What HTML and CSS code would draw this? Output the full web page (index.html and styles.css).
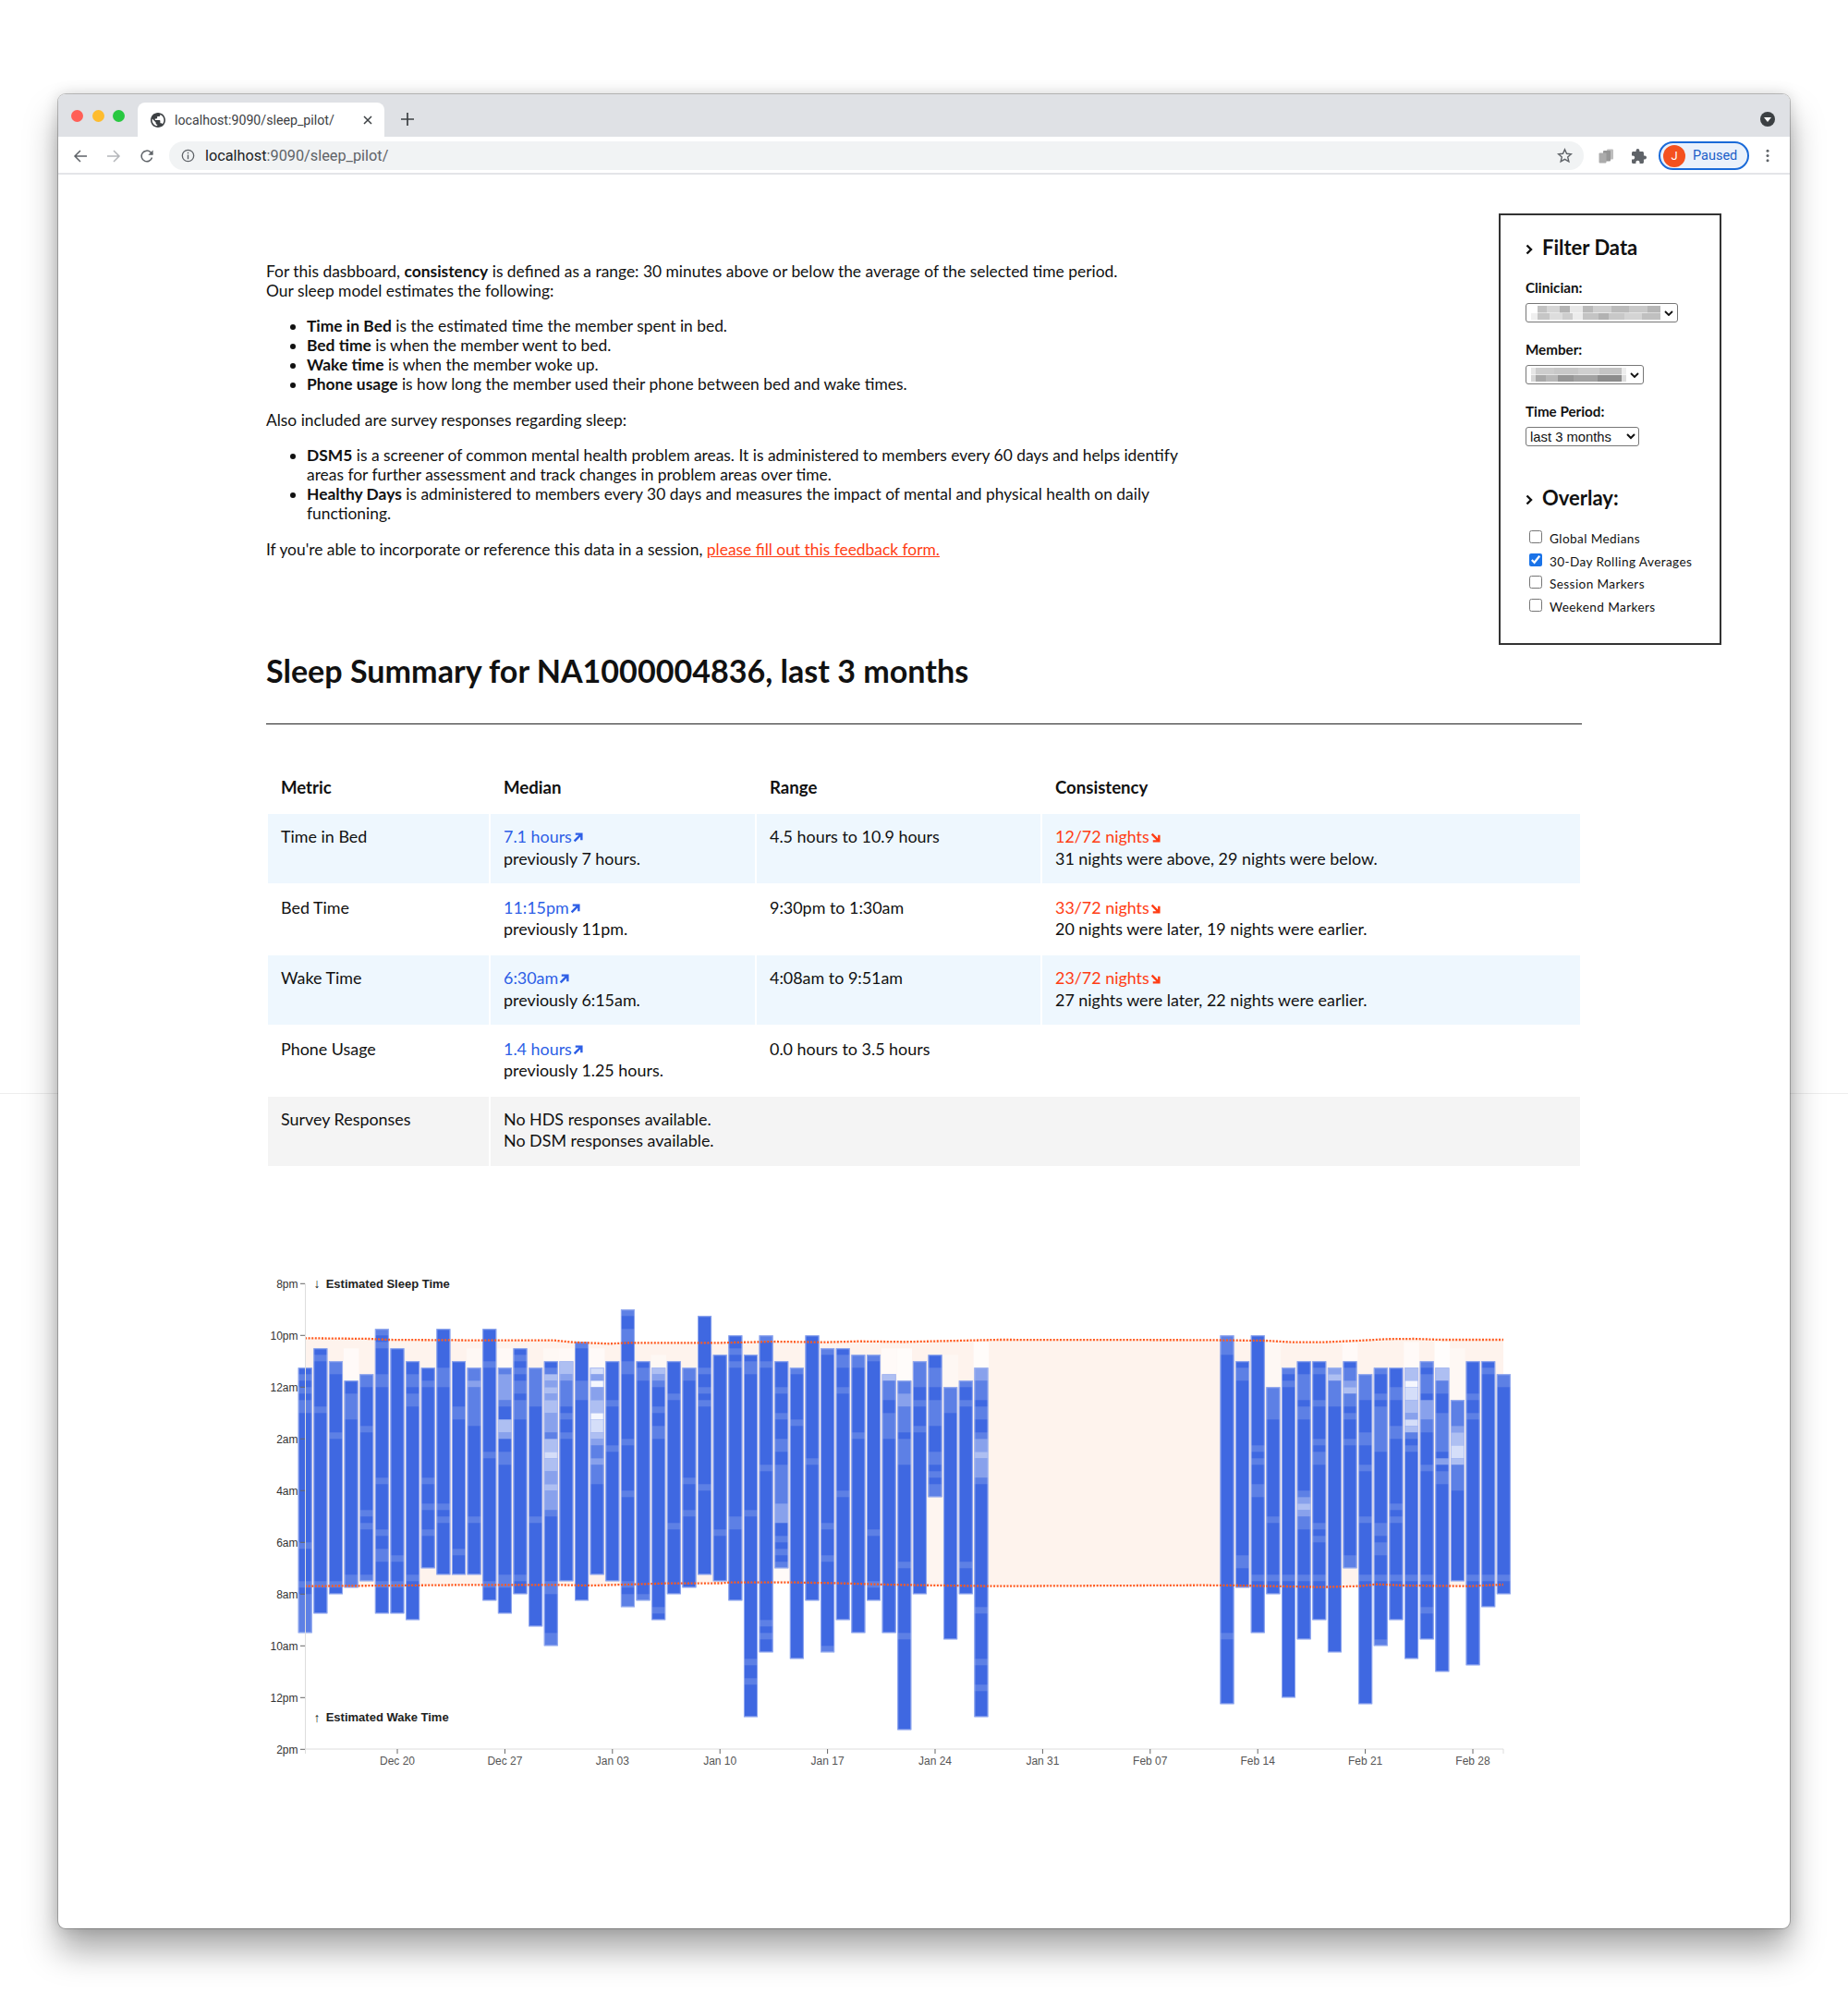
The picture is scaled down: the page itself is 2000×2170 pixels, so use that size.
FILE: index.html
```html
<!DOCTYPE html>
<html lang="en">
  <head>
    <meta charset="UTF-8" />
    <title>localhost:9090/sleep_pilot/</title>
    <link rel="stylesheet" href="styles.css">
  </head>
  <body>
    <div class="window">
      <!-- tab strip -->
      <div class="tabstrip">
        <span class="light light-red"></span>
        <span class="light light-yellow"></span>
        <span class="light light-green"></span>
        <div class="tab">
          <svg class="tab-globe" viewBox="2 2 20 20"><path fill="#3c4043" d="M12 2C6.48 2 2 6.48 2 12s4.48 10 10 10 10-4.48 10-10S17.52 2 12 2zm-1 17.93c-3.95-.49-7-3.85-7-7.93 0-.62.08-1.21.21-1.79L9 15v1c0 1.1.9 2 2 2v1.93zm6.9-2.54c-.26-.81-1-1.39-1.9-1.39h-1v-3c0-.55-.45-1-1-1H8v-2h2c.55 0 1-.45 1-1V7h2c1.1 0 2-.9 2-2v-.41c2.93 1.19 5 4.06 5 7.41 0 2.08-.8 3.97-2.1 5.39z"/></svg>
          <span class="tab-title">localhost:9090/sleep_pilot/</span>
          <svg class="tab-close" viewBox="0 0 10 10"><path d="M1 1l8 8M9 1l-8 8" stroke="#3c4043" stroke-width="1.5" fill="none"/></svg>
        </div>
        <svg class="tab-new" viewBox="0 0 14 14"><path d="M7 0v14M0 7h14" stroke="#3c4043" stroke-width="1.7" fill="none"/></svg>
        <span class="tab-search"><svg viewBox="0 0 16 16"><path d="M4 6h8l-4 5z" fill="#fff"/></svg></span>
      </div>
      <!-- toolbar -->
      <div class="toolbar">
        <svg class="nav-icon" viewBox="0 0 16 16"><path d="M15 8H2M8 2L2 8l6 6" stroke="#5f6368" stroke-width="1.5" fill="none"/></svg>
        <svg class="nav-icon nav-forward" viewBox="0 0 16 16"><path d="M1 8h13M8 2l6 6-6 6" stroke="#b4b6ba" stroke-width="1.5" fill="none"/></svg>
        <svg class="nav-icon nav-reload" viewBox="0 0 16 16"><path d="M13.5 9.5A5.8 5.8 0 1 1 12 3.8L14 6" stroke="#5f6368" stroke-width="1.5" fill="none"/><path d="M14.6 1.5v5.3H9.3z" fill="#5f6368"/></svg>
        <div class="omnibox">
          <svg class="omni-info" viewBox="0 0 16 16"><circle cx="8" cy="8" r="6.6" stroke="#5f6368" stroke-width="1.4" fill="none"/><path d="M8 7v5M8 4v1.6" stroke="#5f6368" stroke-width="1.5"/></svg>
          <span class="omni-url"><span class="omni-host">localhost</span>:9090/sleep_pilot/</span>
          <svg class="omni-star" viewBox="0 0 16 16"><path d="M8 1.6l1.9 4.3 4.7.4-3.6 3.1 1.1 4.6-4.1-2.4-4.1 2.4 1.1-4.6-3.6-3.1 4.7-.4z" stroke="#5f6368" stroke-width="1.3" fill="none"/></svg>
        </div>
        <svg class="ext-docs" viewBox="0 0 16 16"><rect x="9" y="0.5" width="7" height="11" rx="1" fill="#bdbdbd"/><rect x="5" y="2" width="8" height="11.5" rx="1" fill="#969696"/><rect x="0.5" y="4.5" width="8" height="11" rx="1" fill="#ababab"/></svg>
        <svg class="ext-puzzle" viewBox="2 1 21 21"><path fill="#5f6368" d="M20.5 11H19V7c0-1.1-.9-2-2-2h-4V3.5C13 2.12 11.88 1 10.5 1S8 2.12 8 3.5V5H4c-1.1 0-1.99.9-1.99 2v3.8H3.5c1.49 0 2.7 1.21 2.7 2.7s-1.21 2.7-2.7 2.7H2V20c0 1.1.9 2 2 2h3.8v-1.5c0-1.49 1.21-2.7 2.7-2.7 1.49 0 2.7 1.21 2.7 2.7V22H17c1.1 0 2-.9 2-2v-4h1.5c1.38 0 2.5-1.12 2.5-2.5S21.88 11 20.5 11z"/></svg>
        <div class="profile">
          <span class="avatar">J</span>
          <span class="profile-text">Paused</span>
        </div>
        <svg class="menu-dots" viewBox="0 0 4 16"><circle cx="2" cy="2.5" r="1.6" fill="#5f6368"/><circle cx="2" cy="8" r="1.6" fill="#5f6368"/><circle cx="2" cy="13.5" r="1.6" fill="#5f6368"/></svg>
      </div>

      <!-- filter box, sits over the page -->
      <aside class="filter">
        <h3 class="filter-title"><svg class="chevron" viewBox="0 0 8 12"><path d="M1.5 1.5L6 6l-4.5 4.5" stroke="#111" stroke-width="2.4" fill="none"/></svg>Filter Data</h3>
        <div class="field">
          <label class="field-label">Clinician:</label>
          <div class="blur-select blur-clinician"><span class="blur-pixels"></span><svg class="blur-arrow" viewBox="0 0 10 6"><path d="M1 1l4 4 4-4" stroke="#111" stroke-width="1.8" fill="none"/></svg></div>
        </div>
        <div class="field">
          <label class="field-label">Member:</label>
          <div class="blur-select blur-member"><span class="blur-pixels"></span><svg class="blur-arrow" viewBox="0 0 10 6"><path d="M1 1l4 4 4-4" stroke="#111" stroke-width="1.8" fill="none"/></svg></div>
        </div>
        <div class="field">
          <label class="field-label" for="period">Time Period:</label>
          <select id="period" class="period-select"><option>last 3 months</option></select>
        </div>
        <h3 class="filter-title overlay-title"><svg class="chevron" viewBox="0 0 8 12"><path d="M1.5 1.5L6 6l-4.5 4.5" stroke="#111" stroke-width="2.4" fill="none"/></svg>Overlay:</h3>
        <div class="overlay-list">
          <label class="overlay-row"><input type="checkbox" />Global Medians</label>
          <label class="overlay-row"><input type="checkbox" checked />30-Day Rolling Averages</label>
          <label class="overlay-row"><input type="checkbox" />Session Markers</label>
          <label class="overlay-row"><input type="checkbox" />Weekend Markers</label>
        </div>
      </aside>

      <main class="page">
        <div class="intro">
          <p>For this dasbboard, <b>consistency</b> is defined as a range: 30 minutes above or below the average of the selected time period.<br>Our sleep model estimates the following:</p>
          <ul>
            <li><b>Time in Bed</b> is the estimated time the member spent in bed.</li>
            <li><b>Bed time</b> is when the member went to bed.</li>
            <li><b>Wake time</b> is when the member woke up.</li>
            <li><b>Phone usage</b> is how long the member used their phone between bed and wake times.</li>
          </ul>
          <p>Also included are survey responses regarding sleep:</p>
          <ul>
            <li><b>DSM5</b> is a screener of common mental health problem areas. It is administered to members every 60 days and helps identify areas for further assessment and track changes in problem areas over time.</li>
            <li><b>Healthy Days</b> is administered to members every 30 days and measures the impact of mental and physical health on daily functioning.</li>
          </ul>
          <p>If you're able to incorporate or reference this data in a session, <a class="feedback" href="#">please fill out this feedback form.</a></p>
        </div>

        <h1 class="summary-title">Sleep Summary for NA1000004836, last 3 months</h1>
        <hr class="rule">

        <table class="metrics">
          <colgroup>
            <col class="col-metric"><col class="col-median"><col class="col-range"><col class="col-consistency">
          </colgroup>
          <thead>
            <tr><th>Metric</th><th>Median</th><th>Range</th><th>Consistency</th></tr>
          </thead>
          <tbody>
            <tr class="row-blue">
              <td>Time in Bed</td>
              <td><span class="up">7.1 hours<svg class="trend" viewBox="0 0 10 10"><path d="M1.5 8.5L8 2M2.5 1.5H8.5V7.5" stroke="currentColor" stroke-width="2.2" fill="none"/></svg></span><br>previously 7 hours.</td>
              <td>4.5 hours to 10.9 hours</td>
              <td><span class="down">12/72 nights<svg class="trend" viewBox="0 0 10 10"><path d="M1.5 1.5L8 8M8.5 2.5V8.5H2.5" stroke="currentColor" stroke-width="2.2" fill="none"/></svg></span><br>31 nights were above, 29 nights were below.</td>
            </tr>
            <tr>
              <td>Bed Time</td>
              <td><span class="up">11:15pm<svg class="trend" viewBox="0 0 10 10"><path d="M1.5 8.5L8 2M2.5 1.5H8.5V7.5" stroke="currentColor" stroke-width="2.2" fill="none"/></svg></span><br>previously 11pm.</td>
              <td>9:30pm to 1:30am</td>
              <td><span class="down">33/72 nights<svg class="trend" viewBox="0 0 10 10"><path d="M1.5 1.5L8 8M8.5 2.5V8.5H2.5" stroke="currentColor" stroke-width="2.2" fill="none"/></svg></span><br>20 nights were later, 19 nights were earlier.</td>
            </tr>
            <tr class="row-blue">
              <td>Wake Time</td>
              <td><span class="up">6:30am<svg class="trend" viewBox="0 0 10 10"><path d="M1.5 8.5L8 2M2.5 1.5H8.5V7.5" stroke="currentColor" stroke-width="2.2" fill="none"/></svg></span><br>previously 6:15am.</td>
              <td>4:08am to 9:51am</td>
              <td><span class="down">23/72 nights<svg class="trend" viewBox="0 0 10 10"><path d="M1.5 1.5L8 8M8.5 2.5V8.5H2.5" stroke="currentColor" stroke-width="2.2" fill="none"/></svg></span><br>27 nights were later, 22 nights were earlier.</td>
            </tr>
            <tr>
              <td>Phone Usage</td>
              <td><span class="up">1.4 hours<svg class="trend" viewBox="0 0 10 10"><path d="M1.5 8.5L8 2M2.5 1.5H8.5V7.5" stroke="currentColor" stroke-width="2.2" fill="none"/></svg></span><br>previously 1.25 hours.</td>
              <td>0.0 hours to 3.5 hours</td>
              <td></td>
            </tr>
            <tr class="row-grey">
              <td>Survey Responses</td>
              <td colspan="3" class="survey">No HDS responses available.<br>No DSM responses available.</td>
            </tr>
          </tbody>
        </table>

        <!-- viewBox uses window pixels, bars are filled in by chart.js -->
        <svg id="chart" class="chart" viewBox="280 1370 1380 550"></svg>
      </main>
    </div>
    <script src="chart.js"></script>
  </body>
</html>
```
FILE: styles.css
```css
* {
  box-sizing: border-box;
}

html,
body {
  height: 2170px;
  overflow: hidden;
}

body {
  margin: 0;
  padding: 102px 63px 0;
  /* faint seam left and right of the window */
  background: linear-gradient(#eeeeee, #eeeeee) 0 1183px / 100% 1px no-repeat, #fff;
  font-family: Lato, "Liberation Sans", sans-serif;
  color: #111;
}

.window {
  position: relative;
  width: 1874px;
  height: 1985px;
  background: #fff;
  border-radius: 8px;
  box-shadow: 0 0 0 1px rgba(0, 0, 0, 0.22), 0 24px 36px rgba(0, 0, 0, 0.34), 0 0 16px rgba(0, 0, 0, 0.16);
}

/* tab strip */
.tabstrip {
  display: flex;
  align-items: flex-start;
  height: 46px;
  background: #dfe1e5;
  border-radius: 8px 8px 0 0;
}

.light {
  width: 13px;
  height: 13px;
  margin-top: 17px;
  margin-right: 9.5px;
  border-radius: 50%;
}

.light-red {
  margin-left: 14px;
  background: #ff5f57;
}

.light-yellow {
  background: #febc2e;
}

.light-green {
  margin-right: 0;
  background: #28c840;
}

.tab {
  display: flex;
  align-items: center;
  width: 267px;
  height: 37px;
  margin-top: 9px;
  margin-left: 14px;
  padding-left: 14px;
  background: #fff;
  border-radius: 8px 8px 0 0;
}

.tab-globe {
  width: 16px;
  height: 16px;
  margin-right: 10px;
}

.tab-title {
  font-family: Roboto, sans-serif;
  font-size: 14.2px;
  color: #3c4043;
}

.tab-close {
  width: 10px;
  height: 10px;
  margin-left: auto;
  margin-right: 13px;
}

.tab-new {
  width: 14px;
  height: 14px;
  margin-top: 20px;
  margin-left: 18px;
}

.tab-search {
  display: flex;
  width: 16px;
  height: 16px;
  margin-top: 19px;
  margin-left: auto;
  margin-right: 16px;
  background: #3c4043;
  border-radius: 50%;
}

/* toolbar */
.toolbar {
  display: flex;
  align-items: center;
  height: 41px;
  padding-top: 2px;
  background: #fff;
  border-bottom: 2px solid #e4e5e8;
}

.nav-icon {
  width: 16px;
  height: 16px;
  margin-left: 16px;
}

.nav-forward {
  margin-left: 20px;
}

.nav-reload {
  margin-left: 20px;
}

.omnibox {
  display: flex;
  align-items: center;
  width: 1531px;
  height: 31px;
  margin-left: 16px;
  padding-left: 13px;
  background: #f1f3f4;
  border-radius: 16px;
}

.omni-info {
  width: 15px;
  height: 15px;
  margin-right: 11px;
}

.omni-url {
  font-family: Roboto, sans-serif;
  font-size: 16.3px;
  color: #5f6368;
}

.omni-host {
  color: #202124;
}

.omni-star {
  width: 17px;
  height: 17px;
  margin-left: auto;
  margin-right: 12px;
}

.ext-docs {
  width: 16px;
  height: 16px;
  margin-left: 16px;
}

.ext-puzzle {
  width: 16px;
  height: 16px;
  margin-left: 20px;
}

.profile {
  display: flex;
  align-items: center;
  width: 98px;
  height: 31px;
  margin-left: 13px;
  padding-left: 3px;
  background: #eaf1fb;
  border: 2px solid #1a6ad8;
  border-radius: 16px;
}

.avatar {
  width: 24px;
  height: 24px;
  background: #f4511e;
  border-radius: 50%;
  color: #fff;
  font-family: Roboto, sans-serif;
  font-size: 13px;
  line-height: 24px;
  text-align: center;
}

.profile-text {
  margin-left: 8px;
  font-family: Roboto, sans-serif;
  font-size: 14.5px;
  color: #1a5fc8;
}

.menu-dots {
  width: 4px;
  height: 15px;
  margin-left: 18px;
}

/* filter box */
.filter {
  position: absolute;
  top: 129px;
  right: 74px;
  width: 241px;
  height: 467px;
  padding: 21px 0 0 27px;
  background: #fff;
  border: 2px solid #333;
}

.filter-title {
  display: flex;
  align-items: center;
  height: 28px;
  margin: 0;
  font-size: 22px;
  font-weight: 700;
  line-height: 28px;
}

.chevron {
  width: 8px;
  height: 12px;
  margin-right: 10px;
  margin-top: 3px;
}

.field {
  margin-top: 20px;
}

.field-label {
  display: block;
  height: 18px;
  margin-bottom: 8px;
  font-size: 15.2px;
  font-weight: 700;
  line-height: 18px;
}

.blur-select {
  display: flex;
  align-items: center;
  height: 21px;
  padding-left: 5px;
  background: #fff;
  border: 1px solid #777;
  border-radius: 3px;
}

.blur-clinician {
  width: 165px;
}

.blur-member {
  width: 128px;
}

/* two rows of grey squares where the reference hides a name */
.blur-pixels {
  height: 15px;
  margin-right: 4px;
  flex: 1;
  background-repeat: no-repeat;
  background-size: 100% 50%;
  background-position: 0 0, 0 100%;
}

.blur-clinician .blur-pixels {
  background-image:
    linear-gradient(90deg, #fff 5%, #c2c2c2 5% 12%, #d6d6d6 12% 22%, #b4b4b4 22% 30%, #e8e8e8 30% 40%, #b9b9b9 40% 48%, #cfcfcf 48% 62%, #bbbbbb 62% 76%, #c9c9c9 76% 90%, #b6b6b6 90%),
    linear-gradient(90deg, #efefef 5%, #c6c6c6 5% 14%, #dddddd 14% 24%, #cdcdcd 24% 32%, #ececec 32% 40%, #c4c4c4 40% 52%, #b2b2b2 52% 60%, #c8c8c8 60% 72%, #d4d4d4 72% 86%, #c0c0c0 86%);
}

.blur-member .blur-pixels {
  background-image:
    linear-gradient(90deg, #e6e6e6 5%, #cdcdcd 5% 24%, #c8c8c8 24% 50%, #cfcfcf 50% 72%, #c4c4c4 72% 95%, #eeeeee 95%),
    linear-gradient(90deg, #d6d6d6 5%, #a8a8a8 5% 16%, #b8b8b8 16% 28%, #969696 28% 45%, #a2a2a2 45% 70%, #8c8c8c 70% 95%, #dddddd 95%);
}

.blur-arrow {
  width: 10px;
  height: 6px;
  margin-right: 4px;
}

.period-select {
  display: block;
  width: 123px;
  height: 21px;
  padding: 0;
  background: #fff;
  border: 1px solid #777;
  border-radius: 3px;
  font-family: "Liberation Sans", sans-serif;
  font-size: 14.8px;
  color: #111;
}

.overlay-title {
  margin-top: 42px;
}

.overlay-list {
  margin-top: 18px;
}

.overlay-row {
  display: flex;
  align-items: center;
  height: 24.5px;
  font-size: 13.6px;
  letter-spacing: 0.4px;
}

.overlay-row input {
  width: 14px;
  height: 14px;
  margin: -4px 8px 0 4px;
  accent-color: #1a73e8;
}

/* page */
.page {
  width: 1424px;
  margin-left: 225px;
  padding-top: 93.5px;
}

.intro {
  width: 1000px;
  font-size: 17.4px;
  line-height: 21px;
}

.intro p {
  margin: 0 0 17.5px;
}

.intro ul {
  margin: 0 0 17.5px;
  padding-left: 44px;
}

.feedback {
  color: #ff3d14;
}

.summary-title {
  margin: 101.5px 0 0;
  font-size: 34.1px;
  font-weight: 700;
  line-height: 40px;
}

.rule {
  height: 1px;
  margin: 37px 0 0;
  background: #222;
  border: 0;
}

.metrics {
  width: 1424px;
  margin-top: 41px;
  border-collapse: separate;
  border-spacing: 2px;
  table-layout: fixed;
  font-size: 17.9px;
  line-height: 23.5px;
}

.col-metric {
  width: 239px;
}

.col-median {
  width: 286px;
}

.col-range {
  width: 307px;
}

.col-consistency {
  width: 582px;
}

.metrics th {
  height: 52px;
  padding: 0 14px;
  text-align: left;
  font-size: 18.6px;
  font-weight: 700;
}

.metrics td {
  height: 74.5px;
  padding: 13px 14px 0;
  vertical-align: top;
}

.row-blue td {
  background: #eef7fe;
}

.row-grey td {
  background: #f4f4f4;
}

.survey {
  line-height: 22.5px;
}

.up {
  color: #2e5fe6;
}

.down {
  color: #ff3d14;
}

.trend {
  width: 11px;
  height: 11px;
  margin-left: 1px;
}

.chart {
  display: block;
  width: 1380px;
  height: 550px;
  margin: 106px 0 0 -8px;
  font-family: "Liberation Sans", sans-serif;
}
```
FILE: chart.js
```js
// chart numbers are in window pixels, see viewBox
const DAY0_X = 330.2;
const DAY_W = 16.63;
const Y0 = 1389.3; // 8pm
const QUARTER = 7; // one 15 minute cell
const AXIS_END = 1627;
const AXIS_BOTTOM = 1893;

// [day, top cell, bottom cell, lighter cells]
const bars = [
  [0, 13, 54, "14a 16a 18-19a 40a 46a 48-53a"],
  [1, 10, 51, "11a 19a 46a"],
  [2, 12, 48, "12-13a 23a 46a"],
  [3, 15, 47, "17-20a 45-46a"],
  [4, 14, 46, "14-15a 22a 35a 37a 45a"],
  [5, 7, 51, "7a 9a 14-15a 30a 38a 41-42a 46a"],
  [6, 10, 51, "42a 46a"],
  [7, 12, 52, "14-15a 17-18a 45a"],
  [8, 13, 44, "15a 30a 34a 38a"],
  [9, 7, 45, "13-15a 34a 36a"],
  [10, 12, 45, "19-20a 41a"],
  [11, 13, 45, "13-14a 15b 16-21a 36a"],
  [12, 7, 49, "12a 26a 46a"],
  [13, 13, 51, "13a 14-17b 18a 21-22c 23b 26-27a 45-46a"],
  [14, 10, 48, "11a 13a 15-16a 18-20a 45a"],
  [15, 13, 53, "13-18a 36a"],
  [16, 12, 56, "13a 14c 15b 16c 17b 18-19c 20-22b 23a 24-25c 26d 27-28c 29-30b 31c 32-34b 35a 46-47a 54-55a"],
  [17, 12, 46, "12-13c 14b 15-18a 20a 23a"],
  [18, 9, 49, "9a 15-17a"],
  [19, 13, 45, "13d 14b 15e 16-17b 18-19c 20e 21-22d 23c 24b 25-26a 27b 28-30a"],
  [20, 12, 46, "18a 25a"],
  [21, 4, 50, "4a 7-8a 12-13a 24a 32a 46a 48-49a"],
  [22, 12, 49, "13-14a 48a"],
  [23, 13, 52, "13c 14b 15a 19a 22-23a 50a"],
  [24, 12, 48, "17a 37a"],
  [25, 13, 47, "13-14a 30a 35a"],
  [26, 5, 45, "13a 16a 18a 31a"],
  [27, 11, 46, "38a"],
  [28, 8, 49, "10a 12a 36-37a"],
  [29, 11, 67, "12-13a 35a 58a 61a"],
  [30, 8, 57, "8a 12a 28a 52a 54a"],
  [31, 12, 44, "16a 20a 24-25a 28-33a 34-36b 39a 41a 43a"],
  [32, 13, 58, "13a 21a"],
  [33, 8, 49, "27a"],
  [34, 10, 57, "10a 37a 42a 56a"],
  [35, 10, 52, "11-12a 16a 32a"],
  [36, 11, 54, "11-12a 23a"],
  [37, 11, 49, "11a 38a 46a"],
  [38, 14, 54, "14c 15-17a 20-23a"],
  [39, 15, 69, "15-16a 17-18b 19-22a 24-27a 43a 54a"],
  [40, 12, 48, "12-15a 18a 22a"],
  [41, 11, 33, "13-15a 18-21a 26-27a 29a 31-32a"],
  [42, 16, 55, "16-19a"],
  [43, 15, 48, "15a 18a 43a"],
  [44, 13, 67, "13-14b 15-17a 19-20a 23a 24-25b 26c 27-29b 30a 50a 58a 62a"],
  [60, 8, 65, "8-10a 54a"],
  [61, 12, 47, "13-14a 42-43a"],
  [62, 8, 54, "25a 27a 31-32a 45a"],
  [63, 16, 48, "16-20a 36a 45a"],
  [64, 13, 64, "13a 15a 45a"],
  [65, 12, 55, "14-17a 19-20a 32a 33b 34c 35b 36-37a 45a"],
  [66, 12, 52, "13a 18a 24a 26-27a 37a 39a 45a"],
  [67, 13, 57, "13b 14c 15-18a"],
  [68, 12, 44, "13-14a 15b 16c 17-18a 20a 24a 42-43a"],
  [69, 14, 65, "14-17a 23-24a 28a 36a 45a"],
  [70, 13, 56, "13a 17a 19-25a 37-38a 40-41a 45a 55a"],
  [71, 13, 52, "16-17a 22-23a 34a 36a 45a"],
  [72, 13, 58, "13-14c 15e 16-17d 18-19c 20b 21d 22c 23a 25a 45a"],
  [73, 12, 55, "12a 14-16a 18-20b 21-22a 28a 45a 50a"],
  [74, 13, 60, "13-14c 15-16a 20-25a 27b 29-30a"],
  [75, 18, 46, "18-21a 22b 23-24c 25-26d 27c 28-31a"],
  [76, 12, 59, "17a 20a 45a"],
  [77, 12, 50, "13a 45a"],
  [78, 14, 48, "14-15a 45a"],
];

// how much white goes over the blue for each letter
const LEVELS = { a: 0.16, b: 0.38, c: 0.58, d: 0.78, e: 0.95 };

// paler cells of the consistency band [day, cell, count, white]
const paleBand = [
  [3, 10, 5, 0.6], [11, 10, 3, 0.4], [13, 10, 3, 0.5], [16, 10, 2, 0.4], [17, 10, 2, 0.5],
  [19, 10, 3, 0.6], [23, 11, 2, 0.4], [31, 44, 2, 0.6], [38, 10, 4, 0.6], [39, 10, 5, 0.7],
  [41, 33, 13, 0.2], [42, 11, 5, 0.35], [44, 9, 4, 0.7], [63, 9, 7, 0.4], [68, 9, 3, 0.6],
  [72, 9, 4, 0.6], [74, 9, 4, 0.8], [75, 10, 8, 0.4],
];

const topLine = [
  [330, 1448.3], [400, 1449], [420, 1450], [530, 1450.7], [600, 1450.7], [620, 1452.7], [660, 1454.3],
  [680, 1453.3], [780, 1453.3], [840, 1452], [890, 1452.7], [930, 1451.7], [980, 1452.3], [1080, 1450],
  [1300, 1450.3], [1370, 1451], [1400, 1452.7], [1430, 1452.7], [1470, 1451], [1500, 1449.3], [1530, 1449],
  [1560, 1450], [1627, 1450],
];
const bottomLine = [
  [330, 1716.7], [430, 1716], [510, 1715.3], [600, 1715.3], [640, 1716], [720, 1713.7], [780, 1713.5],
  [790, 1712.7], [860, 1712.7], [900, 1713.3], [960, 1715], [1000, 1715.7], [1080, 1716.7], [1300, 1715.7],
  [1340, 1716], [1430, 1717.7], [1470, 1716.7], [1490, 1714.7], [1520, 1716], [1590, 1716.7], [1627, 1715],
];

const yTicks = ["8pm", "10pm", "12am", "2am", "4am", "6am", "8am", "10am", "12pm", "2pm"];
const xTicks = ["Dec 20", "Dec 27", "Jan 03", "Jan 10", "Jan 17", "Jan 24", "Jan 31", "Feb 07", "Feb 14", "Feb 21", "Feb 28"];

const chart = document.querySelector("#chart");

function add(tag, attrs, text) {
  const el = document.createElementNS("http://www.w3.org/2000/svg", tag);
  Object.keys(attrs).forEach((key) => el.setAttribute(key, attrs[key]));
  if (text) el.textContent = text;
  chart.appendChild(el);
  return el;
}

const dayX = (day) => DAY0_X + DAY_W * day;
const cellY = (cell) => Y0 + QUARTER * cell;
const points = (line) => line.map((p) => p.join(",")).join(" ");

// consistency band between the two rolling averages
add("polygon", {
  points: points(topLine) + " " + points(bottomLine.slice().reverse()),
  fill: "#fef3ed",
});
paleBand.forEach(([day, cell, count, white]) => {
  add("rect", {
    x: dayX(day) - DAY_W / 2,
    y: cellY(cell),
    width: DAY_W,
    height: QUARTER * count,
    fill: "#fff",
    "fill-opacity": white,
  });
});

// bars
bars.forEach(([day, top, bottom, cells]) => {
  const x = dayX(day) - 7.5;
  add("rect", {
    x: x,
    y: cellY(top),
    width: 15,
    height: QUARTER * (bottom - top),
    fill: "#3f68e1",
  });
  cells.split(" ").forEach((item) => {
    const m = item.match(/^(\d+)(?:-(\d+))?([a-e])$/);
    const from = Number(m[1]);
    const to = Number(m[2] || m[1]);
    add("rect", {
      x: x,
      y: cellY(from),
      width: 15,
      height: QUARTER * (to - from + 1),
      fill: "#fff",
      "fill-opacity": LEVELS[m[3]],
    });
  });
  // pale outline round each bar
  add("rect", {
    x: x + 0.5,
    y: cellY(top) + 0.5,
    width: 14,
    height: QUARTER * (bottom - top) - 1,
    fill: "none",
    stroke: "#a9bbf3",
    "stroke-width": 1,
    "stroke-opacity": 0.75,
  });
});

// rolling averages
[topLine, bottomLine].forEach((line) => {
  add("polyline", {
    points: points(line),
    fill: "none",
    stroke: "#ff5a1f",
    "stroke-width": 2.3,
    "stroke-dasharray": "2 1.6",
  });
});

// axes
add("line", { x1: 330.5, x2: 330.5, y1: Y0, y2: AXIS_BOTTOM + 5, stroke: "#ddd" });
add("line", { x1: 330.5, x2: AXIS_END, y1: AXIS_BOTTOM, y2: AXIS_BOTTOM, stroke: "#ddd" });
add("line", { x1: AXIS_END, x2: AXIS_END, y1: AXIS_BOTTOM, y2: AXIS_BOTTOM + 5, stroke: "#ddd" });

yTicks.forEach((label, i) => {
  const y = Y0 + 56 * i;
  add("line", { x1: 325, x2: 330, y1: y, y2: y, stroke: "#666" });
  add("text", { x: 322.5, y: y + 4.2, "text-anchor": "end", "font-size": 12, fill: "#333" }, label);
});

xTicks.forEach((label, i) => {
  const x = 430 + 116.4 * i;
  add("line", { x1: x, x2: x, y1: AXIS_BOTTOM, y2: AXIS_BOTTOM + 5, stroke: "#666" });
  add("text", { x: x, y: 1909.5, "text-anchor": "middle", "font-size": 12, fill: "#555" }, label);
});

// notes inside the plot
add("text", { x: 343, y: 1394, "text-anchor": "middle", "font-size": 14, "font-weight": 700, fill: "#222" }, "↓");
add("text", { x: 352.7, y: 1393.7, "font-size": 13, "font-weight": 700, fill: "#222" }, "Estimated Sleep Time");
add("text", { x: 343, y: 1863.5, "text-anchor": "middle", "font-size": 14, "font-weight": 700, fill: "#222" }, "↑");
add("text", { x: 352.7, y: 1863, "font-size": 13, "font-weight": 700, fill: "#222" }, "Estimated Wake Time");
```
